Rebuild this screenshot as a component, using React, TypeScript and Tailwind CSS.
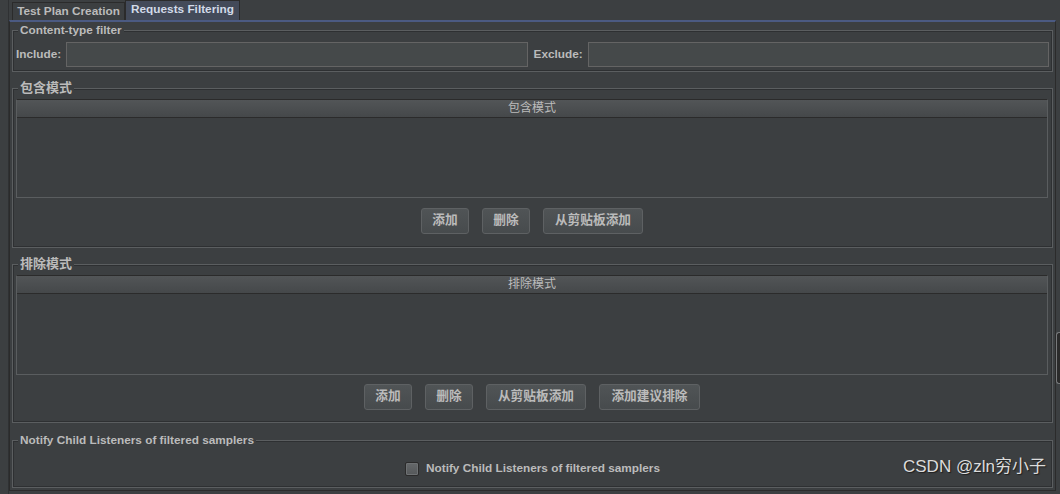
import React from 'react';

function Group({ title, cjk, className, children }: { title: string; cjk?: boolean; className?: string; children?: React.ReactNode }) {
  return (
    <div className={'relative border border-[#5b5e60] shadow-[inset_0_0_0_1px_#2e3032] ' + (className || '')}>
      <span
        className={
          'absolute left-[5px] bg-[#3c3f41] px-[2px] font-bold leading-[14px] text-[#bbbbbb] ' +
          (cjk ? '-top-[8px] text-[13px]' : '-top-[8px] text-[11.8px]')
        }
      >
        {title}
      </span>
      {children}
    </div>
  );
}

function Btn({ label, w }: { label: string; w: string }) {
  return (
    <button
      className={
        'h-[26px] rounded-[3px] border border-[#5e6163] bg-gradient-to-b from-[#505456] to-[#474b4d] text-[12.7px] font-bold text-[#bbbbbb] ' +
        w
      }
    >
      {label}
    </button>
  );
}

function Table({ title, h }: { title: string; h: string }) {
  return (
    <div className={'flex flex-col border border-[#5a5d5f] border-t-[#2b2b2b] ' + h}>
      <div className="h-[18px] border-b border-[#2b2b2b] bg-gradient-to-b from-[#525557] to-[#45484a] text-center leading-[17px] text-[#bbbbbb]">
        {title}
      </div>
      <div className="flex-1 bg-[#3c3f41]" />
    </div>
  );
}

export default function App() {
  return (
    <div className="relative h-[494px] w-[1060px] overflow-hidden bg-[#3c3f41] font-['Liberation_Sans','Noto_Sans_CJK_SC',sans-serif] text-[12px] text-[#bbbbbb]">
      <div className="ml-[8px] h-full border-l border-[#2f3133]">
        {/* tabs */}
        <div className="flex h-[20px] items-end pl-[3px] text-[11.8px]">
          <div className="h-[18px] w-[113px] border border-b-0 border-[#2b2b2b] text-center font-bold leading-[17px] text-[#bbbbbb]">
            Test Plan Creation
          </div>
          <div className="h-[20px] w-[115px] border border-b-0 border-[#2b2b2b] bg-[#434a59] text-center font-bold leading-[16px] text-[#d2dae8]">
            Requests Filtering
          </div>
        </div>

        {/* tab content */}
        <div className="mr-[4px] h-[471px] border-x border-b border-t-2 border-[#2b2b2b] border-t-[#4b5a82] px-[2px]">
          <Group title="Content-type filter" className="mt-[8px] h-[42px]">
            <div className="flex items-center pl-[3px] pr-[3px] pt-[11px] text-[11.8px]">
              <span className="font-bold">Include:</span>
              <div className="ml-[5px] h-[25px] flex-1 border border-[#646464] bg-[#45494a]" />
              <span className="ml-[6px] font-bold">Exclude:</span>
              <div className="ml-[5px] h-[25px] flex-1 border border-[#646464] bg-[#45494a]" />
            </div>
          </Group>

          <Group title="包含模式" cjk className="mt-[16px] h-[160px]">
            <div className="pl-[3px] pr-[4px] pt-[10px]">
              <Table title="包含模式" h="h-[99px]" />
              <div className="mt-[10px] flex justify-center gap-[13px]">
                <Btn label="添加" w="w-[48px]" />
                <Btn label="删除" w="w-[48px]" />
                <Btn label="从剪贴板添加" w="w-[100px]" />
              </div>
            </div>
          </Group>

          <Group title="排除模式" cjk className="mt-[16px] h-[159px]">
            <div className="pl-[3px] pr-[4px] pt-[10px]">
              <Table title="排除模式" h="h-[100px]" />
              <div className="mt-[9px] flex justify-center gap-[13px]">
                <Btn label="添加" w="w-[48px]" />
                <Btn label="删除" w="w-[48px]" />
                <Btn label="从剪贴板添加" w="w-[100px]" />
                <Btn label="添加建议排除" w="w-[101px]" />
              </div>
            </div>
          </Group>

          <Group title="Notify Child Listeners of filtered samplers" className="mt-[17px] h-[48px]">
            <div className="flex items-center justify-center gap-[7px] pt-[19px] text-[11.8px]">
              <div className="h-[14px] w-[14px] rounded-[2px] border border-[#2b2b2b] bg-gradient-to-b from-[#65686a] to-[#55585a] shadow-[inset_0_0_0_1px_#6e7173]" />
              <span className="font-bold">Notify Child Listeners of filtered samplers</span>
            </div>
          </Group>
        </div>
      </div>

      {/* right edge splitter */}
      <div className="absolute right-0 top-[332px] h-[52px] w-[4px] rounded-l-[3px] border border-r-0 border-[#77797b] bg-[#2b2b2b]" />

      {/* watermark */}
      <div className="absolute left-[903px] top-[456px] text-[17px] leading-[22px] text-[#dcdcdc] [text-shadow:1px_1px_1px_#1e1e1e]">
        CSDN @zln穷小子
      </div>
    </div>
  );
}
